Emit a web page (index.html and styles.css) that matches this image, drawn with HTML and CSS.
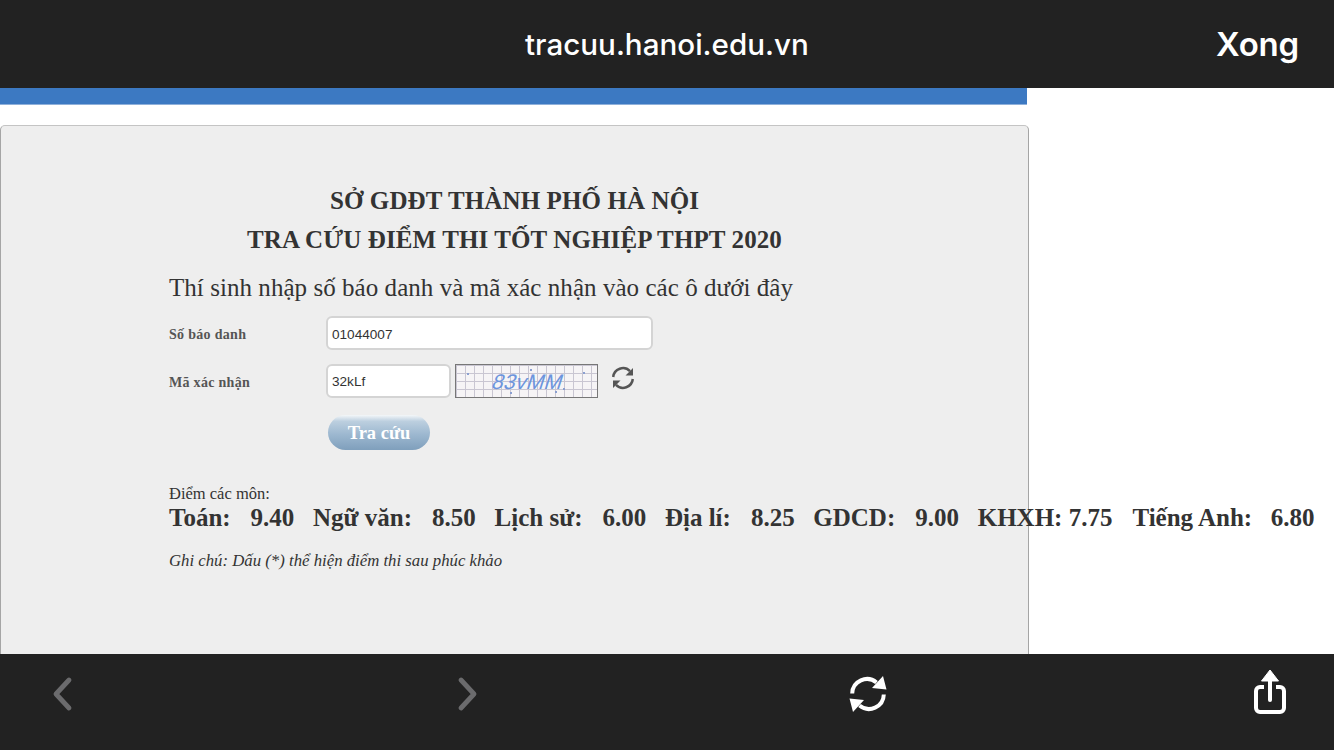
FILE: index.html
```html
<!DOCTYPE html>
<html lang="vi">
<head>
<meta charset="utf-8">
<title>tracuu.hanoi.edu.vn</title>
<link rel="stylesheet" href="styles.css">
</head>
<body>
<header class="topbar">
  <div class="url">tracuu.hanoi.edu.vn</div>
  <div class="done">Xong</div>
</header>
<main class="viewport">
  <div class="blue"></div>
  <section class="card">
    <h1 class="title">SỞ GDĐT THÀNH PHỐ HÀ NỘI</h1>
    <h1 class="title second">TRA CỨU ĐIỂM THI TỐT NGHIỆP THPT 2020</h1>
    <div class="inner">
      <p class="lead">Thí sinh nhập số báo danh và mã xác nhận vào các ô dưới đây</p>
      <div class="row row1">
        <label class="lbl">Số báo danh</label>
        <div class="input wide">01044007</div>
      </div>
      <div class="row row2">
        <label class="lbl">Mã xác nhận</label>
        <div class="input short">32kLf</div>
        <div class="captcha"><span class="captcha-text">83vMM</span></div>
        <svg class="cap-refresh" width="26" height="26" viewBox="0 0 26 26" fill="none">
          <path d="M3.2 12A9.8 9.8 0 0 1 20 6.2" stroke="#555" stroke-width="2.5"/>
          <path d="M22.8 14A9.8 9.8 0 0 1 6 19.8" stroke="#555" stroke-width="2.5"/>
          <path d="M23 3v7.500h-7.500z M3 23v-7.500h7.500z" fill="#555"/>
        </svg>
      </div>
      <div class="row row3"><button class="btn">Tra cứu</button></div>
      <p class="sub">Điểm các môn:</p>
      <div class="scores">
        <span>Toán:</span><span>9.40</span><span>Ngữ văn:</span><span>8.50</span><span>Lịch sử:</span><span>6.00</span><span>Địa lí:</span><span>8.25</span><span>GDCD:</span><span>9.00</span><span>KHXH: 7.75</span><span>Tiếng Anh:</span><span>6.80</span>
      </div>
      <p class="note">Ghi chú: Dấu (*) thể hiện điểm thi sau phúc khảo</p>
    </div>
  </section>
</main>
<footer class="bottombar">
  <svg class="ic" width="24" height="36" viewBox="0 0 24 36" fill="none"><path d="M19 4 6 18l13 14" stroke="#6b6b6d" stroke-width="4.800" stroke-linecap="round" stroke-linejoin="round"/></svg>
  <svg class="ic" width="24" height="36" viewBox="0 0 24 36" fill="none"><path d="M5 4l13 14L5 32" stroke="#6b6b6d" stroke-width="4.800" stroke-linecap="round" stroke-linejoin="round"/></svg>
  <svg class="ic" width="40" height="40" viewBox="0 0 40 40" fill="none">
    <path d="M4.200 19.500A14.800 14.800 0 0 1 28.500 8.500" stroke="#fff" stroke-width="4"/>
    <path d="M35.800 20.500A14.800 14.800 0 0 1 11.500 31.500" stroke="#fff" stroke-width="4"/>
    <path d="M35 2 38.500 15.500 24 14z M5 38 1.500 24.500 16 26z" fill="#fff"/>
  </svg>
  <svg class="ic share" width="34" height="46" viewBox="0 0 34 46" fill="none">
    <path d="M11 18H7a4 4 0 0 0-4 4v17a4 4 0 0 0 4 4h20a4 4 0 0 0 4-4V22a4 4 0 0 0-4-4h-4" stroke="#fff" stroke-width="4"/>
    <path d="M17 8v23" stroke="#fff" stroke-width="4" stroke-linecap="round"/>
    <path d="M17 1l8.500 11h-17z" fill="#fff" stroke="#fff" stroke-linejoin="round"/>
  </svg>
</footer>
</body>
</html>
```
FILE: styles.css
```css
* { box-sizing: border-box; }
html, body { margin: 0; padding: 0; }
body {
  width: 1334px;
  height: 750px;
  overflow: hidden;
  display: flex;
  flex-direction: column;
  background: #fff;
}
.topbar {
  flex: 0 0 88px;
  background: #222;
  color: #fff;
  font-family: Inter, "Liberation Sans", sans-serif;
  display: flex;
  align-items: center;
  justify-content: space-between;
  padding: 0 35px 0 525px;
}
.url { font-size: 29.6px; font-weight: 500; }
.done { font-size: 33px; font-weight: 600; letter-spacing: -0.2px; }
.viewport { flex: 0 0 566px; overflow: hidden; }
.blue {
  width: 1027px;
  height: 17px;
  background: #3c79c2;
  border-bottom: 1px solid #8fb0da;
}
.card {
  width: 1029px;
  height: 560px;
  margin-top: 20px;
  background: #eee;
  border: 1px solid #a5a5a5;
  border-top-color: #c4c4c4;
  border-radius: 5px;
  padding-top: 55px;
  color: #333;
  font-family: "Liberation Serif", serif;
}
.title {
  margin: 0;
  font-size: 25px;
  line-height: 39px;
  font-weight: 700;
  text-align: center;
  letter-spacing: 0.11px;
}
.inner { padding-left: 168px; }
.lead { margin: 14px 0 0; font-size: 25px; line-height: 30px; letter-spacing: 0.05px; }
.row { display: flex; align-items: center; }
.row1 { margin-top: 13px; height: 34px; }
.row2 { margin-top: 14px; height: 34px; }
.row3 { margin-top: 17px; padding-left: 159px; }
.lbl { width: 157px; padding-top: 3px; font-size: 14px; font-weight: 700; color: #555; letter-spacing: 0.3px; }
.input {
  height: 34px;
  background: #fff;
  border: 2px solid #d4d4d4;
  border-radius: 6px;
  font-family: "Liberation Sans", sans-serif;
  font-size: 13.6px;
  color: #333;
  line-height: 32px;
  padding-left: 4px;
}
.wide { width: 327px; line-height: 33px; }
.short { width: 125px; }
.captcha {
  width: 143px;
  height: 34px;
  margin-left: 4px;
  padding-left: 3px;
  border: 1px solid #777;
  background-color: #f6f4f6;
  background-image:
    radial-gradient(circle at 12px 9px, #8a9fd0 1px, transparent 1.5px),
    radial-gradient(circle at 75px 5px, #8a9fd0 1px, transparent 1.5px),
    radial-gradient(circle at 108px 24px, #8a9fd0 1px, transparent 1.5px),
    radial-gradient(circle at 128px 8px, #8a9fd0 1px, transparent 1.5px),
    radial-gradient(circle at 100px 27px, #8a9fd0 1px, transparent 1.5px),
    radial-gradient(circle at 55px 28px, #8a9fd0 1px, transparent 1.5px),
    linear-gradient(#c9c6d2 1px, transparent 1px),
    linear-gradient(90deg, #c9c6d2 1px, transparent 1px);
  background-size: auto, auto, auto, auto, auto, auto, 9px 8px, 9px 8px;
  text-align: center;
}
.captcha-text {
  display: inline-block;
  font-family: "Liberation Sans", sans-serif;
  font-size: 21px;
  line-height: 33px;
  letter-spacing: 0.3px;
  color: #6d94dd;
  transform: skewX(-18deg);
}
.cap-refresh { margin: -6px 0 0 12px; }
.btn {
  width: 102px;
  height: 35px;
  border: 0;
  padding: 2px 0 0;
  border-radius: 17.5px;
  background: linear-gradient(#f4f7f9 0, #bccfdf 18%, #9db8d0 55%, #7f9fbc 100%);
  color: #fff;
  font-family: "Liberation Serif", serif;
  font-size: 18.5px;
  font-weight: 700;
}
.sub { margin: 35px 0 0; font-size: 16.5px; line-height: 18px; }
.scores {
  display: flex;
  white-space: nowrap;
  font-size: 25px;
  line-height: 28px;
  font-weight: 700;
  margin-top: 1px;
}
.scores span:nth-child(odd) { margin-right: 20px; }
.scores span:nth-child(even) { margin-right: 18.7px; }
.note { margin: 19px 0 0; font-size: 16.75px; line-height: 20px; font-style: italic; }
.bottombar {
  flex: 0 0 96px;
  background: #222;
  position: relative;
}
.ic { position: absolute; }
.ic:nth-child(1) { left: 50px; top: 22px; }
.ic:nth-child(2) { left: 456px; top: 22px; }
.ic:nth-child(3) { left: 848px; top: 20px; }
.ic:nth-child(4) { left: 1253px; top: 15px; }
```
